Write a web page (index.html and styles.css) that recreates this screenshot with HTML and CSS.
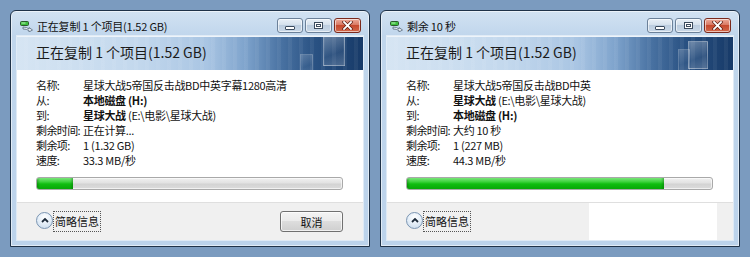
FILE: index.html
```html
<!DOCTYPE html>
<html lang="zh-CN">
<head>
<meta charset="utf-8">
<title>复制</title>
<link rel="stylesheet" href="styles.css">
</head>
<body>
<div class="desk">
  <div class="win">
    <div class="titlebar">
      <svg class="appicon" width="14" height="12" viewBox="0 0 14 12">
        <rect x="0.5" y="1.5" width="8" height="4" rx="1" fill="#3fbf3f" stroke="#2b5a2b"/>
        <rect x="1.5" y="2.5" width="4" height="1" fill="#b8f0b8"/>
        <path d="M3 7 Q7 7 9 9 L9 7.5 L12.5 10 L9 12 L9 10.5 Q6.5 9 3 9 Z" fill="#e8eef4" stroke="#56677a" stroke-width="0.8"/>
      </svg>
      <span class="title">正在复制 1 个项目(1.52 GB)</span>
      <div class="caption">
        <span class="cbtn min"><i></i></span>
        <span class="cbtn max"><i></i></span>
        <span class="cbtn close"><svg width="11" height="9" viewBox="0 0 11 9"><path d="M2 1 L9 8 M9 1 L2 8" stroke="#5a1a10" stroke-width="3.2" stroke-linecap="square"/><path d="M2 1 L9 8 M9 1 L2 8" stroke="#fff" stroke-width="1.8" stroke-linecap="square"/></svg></span>
      </div>
    </div>
    <div class="client">
      <div class="header">
        <span class="instr">正在复制 1 个项目(1.52 GB)</span>
        <i class="pane pane-a"></i>
        <i class="pane pane-b"></i>
      </div>
      <div class="body">
        <div class="info">
          <span class="lbl">名称:</span><span class="val">星球大战5帝国反击战BD中英字幕1280高清</span>
          <span class="lbl">从:</span><span class="val"><b>本地磁盘 (H:)</b></span>
          <span class="lbl">到:</span><span class="val"><b>星球大战</b> (E:\电影\星球大战)</span>
          <span class="lbl">剩余时间:</span><span class="val">正在计算...</span>
          <span class="lbl">剩余项:</span><span class="val">1 (1.32 GB)</span>
          <span class="lbl">速度:</span><span class="val">33.3 MB/秒</span>
        </div>
        <div class="progress"><div class="fill" style="width:11.7%"></div></div>
      </div>
      <div class="footer">
        <span class="chev"><svg width="8" height="6" viewBox="0 0 8 6"><path d="M1 5 L4 2 L7 5" fill="none" stroke="#1c2a3a" stroke-width="1.8"/></svg></span>
        <span class="less">简略信息</span>
        <span class="cancel">取消</span>
      </div>
    </div>
  </div>

  <div class="win">
    <div class="titlebar">
      <svg class="appicon" width="14" height="12" viewBox="0 0 14 12">
        <rect x="0.5" y="1.5" width="8" height="4" rx="1" fill="#3fbf3f" stroke="#2b5a2b"/>
        <rect x="1.5" y="2.5" width="4" height="1" fill="#b8f0b8"/>
        <path d="M3 7 Q7 7 9 9 L9 7.5 L12.5 10 L9 12 L9 10.5 Q6.5 9 3 9 Z" fill="#e8eef4" stroke="#56677a" stroke-width="0.8"/>
      </svg>
      <span class="title">剩余 10 秒</span>
      <div class="caption">
        <span class="cbtn min"><i></i></span>
        <span class="cbtn max"><i></i></span>
        <span class="cbtn close"><svg width="11" height="9" viewBox="0 0 11 9"><path d="M2 1 L9 8 M9 1 L2 8" stroke="#5a1a10" stroke-width="3.2" stroke-linecap="square"/><path d="M2 1 L9 8 M9 1 L2 8" stroke="#fff" stroke-width="1.8" stroke-linecap="square"/></svg></span>
      </div>
    </div>
    <div class="client">
      <div class="header">
        <span class="instr">正在复制 1 个项目(1.52 GB)</span>
        <i class="pane pane-c"></i>
        <i class="pane pane-d"></i>
      </div>
      <div class="body">
        <div class="info">
          <span class="lbl">名称:</span><span class="val">星球大战5帝国反击战BD中英</span>
          <span class="lbl">从:</span><span class="val"><b>星球大战</b> (E:\电影\星球大战)</span>
          <span class="lbl">到:</span><span class="val"><b>本地磁盘 (H:)</b></span>
          <span class="lbl">剩余时间:</span><span class="val">大约 10 秒</span>
          <span class="lbl">剩余项:</span><span class="val">1 (227 MB)</span>
          <span class="lbl">速度:</span><span class="val">44.3 MB/秒</span>
        </div>
        <div class="progress"><div class="fill" style="width:84.4%"></div></div>
      </div>
      <div class="footer">
        <span class="chev"><svg width="8" height="6" viewBox="0 0 8 6"><path d="M1 5 L4 2 L7 5" fill="none" stroke="#1c2a3a" stroke-width="1.8"/></svg></span>
        <span class="less">简略信息</span>
        <span class="blank"></span>
      </div>
    </div>
  </div>
</div>
</body>
</html>
```

FILE: styles.css
```css
* { box-sizing: border-box; }
html, body { margin: 0; padding: 0; }
body {
  width: 750px;
  height: 257px;
  overflow: hidden;
  background: #7b9bbf;
  font-family: "Noto Sans CJK SC", "Noto Sans", sans-serif;
  font-size: 11px;
  color: #111;
}
.desk {
  display: flex;
  gap: 10px;
  padding: 10px;
}
.win {
  width: 360px;
  height: 237px;
  border: 1px solid #1f3248;
  border-radius: 6px 6px 0 0;
  background: linear-gradient(180deg, #d2e2f2 0px, #c0d6ec 25px, #bcd3eb 100%);
  box-shadow: inset 0 0 0 1px rgba(255,255,255,0.55);
  display: flex;
  flex-direction: column;
}
.titlebar {
  height: 25px;
  flex: none;
  display: flex;
  align-items: center;
  padding: 4px 8px 0 9px;
}
.appicon { flex: none; margin-right: 3px; }
.title {
  font-size: 11px;
  line-height: 14px;
  letter-spacing: -0.2px;
  color: #111;
  white-space: nowrap;
}
.caption {
  margin-left: auto;
  display: flex;
  gap: 2px;
}
.cbtn {
  width: 27px;
  height: 15px;
  border: 1px solid #6c8199;
  border-radius: 3px;
  background: linear-gradient(180deg, #e9f0f7 0%, #d4e0ec 45%, #bccddf 50%, #c9d8e8 100%);
  display: flex;
  align-items: center;
  justify-content: center;
  box-shadow: inset 0 0 0 1px rgba(255,255,255,0.6);
}
.cbtn.min { width: 26px; }
.cbtn.min i {
  width: 10px;
  height: 4px;
  margin-top: 4px;
  background: #fff;
  border: 1px solid #3b4b5e;
  border-radius: 1px;
}
.cbtn.max i {
  width: 9px;
  height: 7px;
  border: 1px solid #3b4b5e;
  box-shadow: inset 0 0 0 1px #fff, inset 0 0 0 2px #3b4b5e;
  background: #fff;
}
.cbtn.close {
  border-color: #7b2a1d;
  background: linear-gradient(180deg, #eeab9b 0%, #d97a64 45%, #c74a2f 50%, #d2674a 100%);
}
.client {
  flex: 1;
  margin: 0 6px 6px 6px;
  background: #fff;
  display: flex;
  flex-direction: column;
  box-shadow: 0 0 0 1px rgba(255,255,255,0.5);
}
.header {
  position: relative;
  overflow: hidden;
  height: 34px;
  flex: none;
  padding: 5px 0 0 19px;
  background:
    repeating-linear-gradient(90deg, rgba(255,255,255,0) 0 7px, rgba(255,255,255,0.05) 7px 11px),
    linear-gradient(90deg, #d6e5f3 0%, #c3d8ed 35%, #a9c5e3 55%, #7ea3cc 66%, #4a73a3 76%, #2a5283 86%, #173a68 100%);
  border-top: 1px solid #eef4fa;
}
.instr {
  font-size: 14px;
  line-height: 20px;
  color: #1b1b1b;
  white-space: nowrap;
  position: relative;
}
.pane {
  position: absolute;
  display: block;
  border: 1px solid rgba(255,255,255,0.3);
  background: linear-gradient(160deg, rgba(255,255,255,0.3), rgba(255,255,255,0.06) 60%, rgba(255,255,255,0.2));
}
.pane-a { left: 306px; top: -2px; width: 22px; height: 31px; }
.pane-b { left: 283px; top: 17px; width: 13px; height: 20px; opacity: 0.6; }
.pane-c { left: 301px; top: 4px; width: 20px; height: 28px; }
.pane-d { left: 291px; top: 12px; width: 12px; height: 24px; opacity: 0.6; }
.body {
  height: 132px;
  flex: none;
  padding: 8px 20px 0 19px;
}
.info {
  display: grid;
  grid-template-columns: 47px auto;
  line-height: 15px;
  letter-spacing: -0.3px;
  white-space: nowrap;
}
.lbl { letter-spacing: -0.6px; }
.info b { font-weight: 700; }
.progress {
  margin-top: 9px;
  height: 13px;
  border: 1px solid #a9a9a9;
  border-radius: 3px;
  background: linear-gradient(180deg, #f1f1f1 0%, #e2e2e2 45%, #d3d3d3 55%, #dcdcdc 100%);
  overflow: hidden;
  box-shadow: inset 0 0 0 1px rgba(255,255,255,0.6);
}
.fill {
  height: 100%;
  background:
    linear-gradient(90deg, rgba(0,80,0,0.35) 0, rgba(0,80,0,0) 3px, rgba(0,80,0,0) calc(100% - 3px), rgba(0,80,0,0.35) 100%),
    linear-gradient(180deg, #7ae57a 0%, #3bd23b 35%, #0fbd0f 55%, #07a807 100%);
}
.footer {
  flex: 1;
  background: #f0f0f0;
  border-top: 1px solid #dfdfdf;
  display: flex;
  align-items: center;
  padding: 0 20px 0 19px;
}
.chev {
  width: 17px;
  height: 17px;
  border-radius: 50%;
  border: 1px solid #7b95b2;
  background: radial-gradient(circle at 50% 30%, #ffffff 0%, #e4eef8 50%, #c5d7ea 100%);
  display: flex;
  align-items: center;
  justify-content: center;
  margin-top: -3px;
}
.less {
  border: 1px dotted #555;
  line-height: 19px;
  padding: 0 1px;
  white-space: nowrap;
}
.cancel {
  margin-left: auto;
  width: 63px;
  height: 21px;
  border: 1px solid #707070;
  border-radius: 3px;
  background: linear-gradient(180deg, #f4f4f4 0%, #ebebeb 45%, #dddddd 50%, #cfcfcf 100%);
  box-shadow: inset 0 0 0 1px rgba(255,255,255,0.7);
  display: flex;
  align-items: center;
  justify-content: center;
  line-height: 14px;
}
.blank {
  margin-left: auto;
  margin-right: -4px;
  align-self: stretch;
  width: 128px;
  background: #fff;
}
```
